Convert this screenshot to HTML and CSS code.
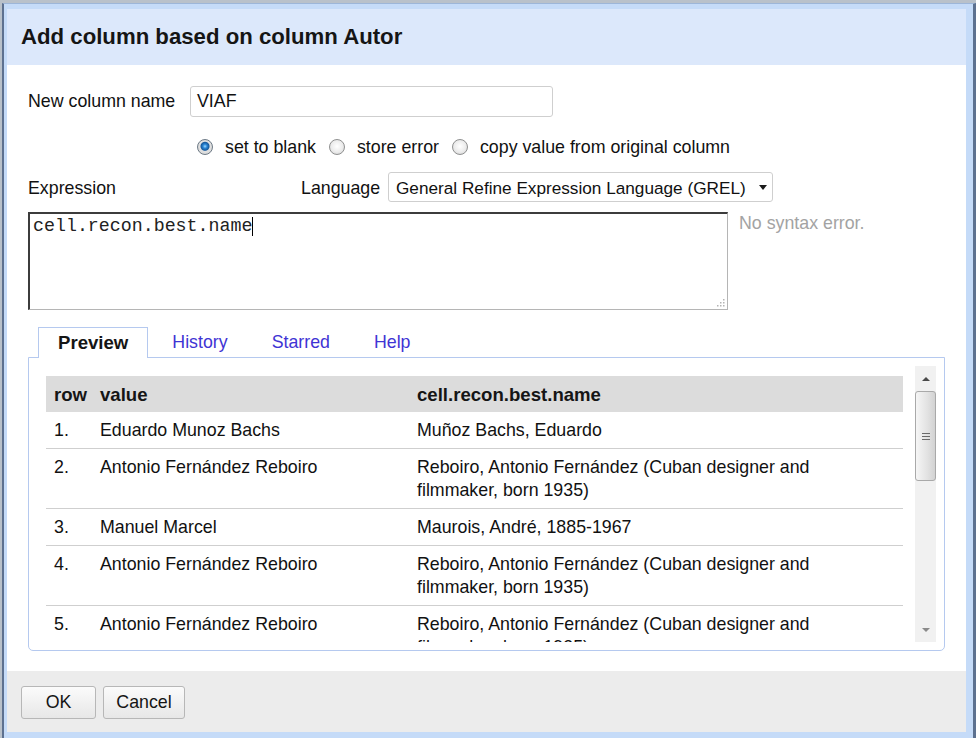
FILE: index.html
```html
<!DOCTYPE html>
<html>
<head>
<meta charset="utf-8">
<title>Add column based on column Autor</title>
<link rel="stylesheet" href="styles.css">
</head>
<body>
<div class="frame">
  <div class="dialog">
    <div class="dlg-header"><h1 class="dlg-title">Add column based on column Autor</h1></div>
    <div class="dlg-body">
      <div class="name-row">
        <span class="field-label">New column name</span>
        <div class="text-input">VIAF</div>
      </div>
      <div class="radio-row">
        <span class="radio checked"></span><span class="radio-label">set to blank</span>
        <span class="radio"></span><span class="radio-label">store error</span>
        <span class="radio"></span><span class="radio-label">copy value from original column</span>
      </div>
      <div class="expr-row">
        <span class="expr-label">Expression</span>
        <span class="lang-label">Language</span>
        <div class="select"><span class="select-text">General Refine Expression Language (GREL)</span><span class="select-arrow"></span></div>
      </div>
      <div class="editor-row">
        <div class="code-area"><span class="code">cell.recon.best.name</span><span class="caret"></span>
          <svg class="grip" width="10" height="10" viewBox="0 0 10 10"><g fill="#b4b4b4"><rect x="8" y="2" width="1.5" height="1.5"/><rect x="5" y="5" width="1.5" height="1.5"/><rect x="8" y="5" width="1.5" height="1.5"/><rect x="2" y="8" width="1.5" height="1.5"/><rect x="5" y="8" width="1.5" height="1.5"/><rect x="8" y="8" width="1.5" height="1.5"/></g></svg>
        </div>
        <div class="status">No syntax error.</div>
      </div>
      <div class="tabs">
        <div class="tab active">Preview</div>
        <div class="tab">History</div>
        <div class="tab">Starred</div>
        <div class="tab">Help</div>
      </div>
      <div class="tab-panel">
        <div class="preview-scroll">
          <div class="table-clip">
            <table class="preview-table">
              <colgroup><col class="c-row"><col class="c-val"><col class="c-res"></colgroup>
              <thead>
                <tr><th>row</th><th>value</th><th>cell.recon.best.name</th></tr>
              </thead>
              <tbody>
                <tr><td>1.</td><td>Eduardo Munoz Bachs</td><td class="res">Muñoz Bachs, Eduardo</td></tr>
                <tr><td>2.</td><td>Antonio Fernández Reboiro</td><td class="res">Reboiro, Antonio Fernández (Cuban designer and filmmaker, born 1935)</td></tr>
                <tr><td>3.</td><td>Manuel Marcel</td><td class="res">Maurois, André, 1885-1967</td></tr>
                <tr><td>4.</td><td>Antonio Fernández Reboiro</td><td class="res">Reboiro, Antonio Fernández (Cuban designer and filmmaker, born 1935)</td></tr>
                <tr><td>5.</td><td>Antonio Fernández Reboiro</td><td class="res">Reboiro, Antonio Fernández (Cuban designer and filmmaker, born 1935)</td></tr>
              </tbody>
            </table>
          </div>
          <div class="scrollbar">
            <div class="sb-btn"><span class="tri-up"></span></div>
            <div class="sb-thumb"><span class="sb-grip"></span></div>
            <div class="sb-track"></div>
            <div class="sb-btn"><span class="tri-down"></span></div>
          </div>
        </div>
      </div>
    </div>
    <div class="dlg-footer">
      <button class="btn btn-ok">OK</button>
      <button class="btn btn-cancel">Cancel</button>
    </div>
  </div>
</div>
</body>
</html>
```
FILE: styles.css
```css
html, body {
  margin: 0;
  padding: 0;
}
body {
  background: #b9c1ca;
  font-family: "Liberation Sans", Arial, sans-serif;
  font-size: 17.8px;
  color: #111;
}
.frame {
  margin: 3px 0 0 2px;
  height: 735px;
  box-sizing: border-box;
  border-left: 2px solid #5d7190;
  border-right: 3px solid #5d7190;
  border-top: 1px solid #9db6d8;
  background: #c5dbf8;
  padding: 5px 7px 6px 3px;
  display: flex;
}
.dialog {
  flex: 1;
  display: flex;
  flex-direction: column;
  background: #fff;
}
.dlg-header {
  height: 56px;
  flex: none;
  background: #dce8fb;
  display: flex;
  align-items: center;
  padding-left: 14px;
}
.dlg-title {
  margin: 0;
  font-size: 22.2px;
  font-weight: bold;
  color: #151515;
}
.dlg-body {
  flex: 1;
  padding: 21px 21px 0 21px;
}
.name-row {
  display: flex;
  align-items: center;
  height: 31px;
}
.field-label {
  width: 162px;
  flex: none;
}
.text-input {
  width: 363px;
  height: 31px;
  box-sizing: border-box;
  border: 1px solid #cfcfcf;
  border-radius: 3px;
  padding-left: 6px;
  display: flex;
  align-items: center;
}
.radio-row {
  margin-top: 18px;
  height: 24px;
  display: flex;
  align-items: center;
  padding-left: 169px;
}
.radio {
  width: 16px;
  height: 16px;
  box-sizing: border-box;
  border-radius: 50%;
  border: 1px solid #8f9090;
  background: radial-gradient(circle at 50% 45%, #ffffff 0%, #ececec 55%, #cdcdcd 100%);
  margin-right: 12px;
  flex: none;
}
.radio.checked {
  border-color: #6d7a86;
  background: radial-gradient(circle at 50% 45%, #9fdcff 0px, #2b86d6 2px, #175a9c 4px, #e2e2e2 5px, #cfcfcf 100%);
}
.radio-label {
  margin-right: 13px;
}
.expr-row {
  margin-top: 13px;
  height: 30px;
  display: flex;
  align-items: center;
}
.expr-label {
  width: 273px;
  flex: none;
  padding-top: 3px;
}
.lang-label {
  width: 87px;
  flex: none;
  padding-top: 3px;
}
.select {
  width: 385px;
  height: 30px;
  box-sizing: border-box;
  border: 1px solid #cfcfcf;
  border-radius: 3px;
  padding-left: 7px;
  display: flex;
  align-items: center;
  background: #fff;
}
.select-text {
  font-size: 17.2px;
  padding-top: 2px;
}
.select-arrow {
  margin-left: auto;
  margin-right: 5px;
  width: 0;
  height: 0;
  border-left: 4.5px solid transparent;
  border-right: 4.5px solid transparent;
  border-top: 5px solid #1a1a1a;
}
.editor-row {
  margin-top: 10px;
  display: flex;
}
.code-area {
  position: relative;
  width: 700px;
  height: 98px;
  box-sizing: border-box;
  border-top: 2px solid #3c3c3c;
  border-left: 2px solid #3c3c3c;
  border-right: 1px solid #b5b5b5;
  border-bottom: 1px solid #b5b5b5;
  padding: 2px 3px;
  font-family: "Liberation Mono", "Courier New", monospace;
  font-size: 18.3px;
  line-height: 20px;
  color: #222;
  display: flex;
  align-items: flex-start;
}
.caret {
  display: inline-block;
  width: 0;
  height: 19px;
  border-left: 1px solid #000;
  margin-top: 1px;
}
.grip {
  position: absolute;
  right: 2px;
  bottom: 2px;
}
.status {
  margin-left: 11px;
  color: #a3a3a3;
  line-height: 20px;
  padding-top: 1px;
}
.tabs {
  margin-top: 17px;
  display: flex;
  padding-left: 10px;
  height: 30px;
}
.tab {
  height: 30px;
  box-sizing: border-box;
  padding: 0 19px;
  display: flex;
  align-items: center;
  margin-right: 4px;
  color: #3f34d4;
  border: 1px solid transparent;
  border-bottom: none;
}
.tab.active {
  position: relative;
  z-index: 1;
  height: 31px;
  margin-bottom: -1px;
  border-color: #b5c9ef;
  background: #fff;
  color: #151515;
  font-weight: bold;
  font-size: 18.6px;
}
.tab-panel {
  border: 1px solid #b5c9ef;
  border-radius: 0 0 5px 5px;
  padding: 8px 8px 8px 17px;
}
.preview-scroll {
  display: flex;
  height: 276px;
}
.table-clip {
  flex: 1;
  overflow: hidden;
  padding-top: 10px;
  margin-right: 12px;
}
.preview-table {
  width: 100%;
  border-collapse: collapse;
  table-layout: fixed;
}
.c-row { width: 46px; }
.c-val { width: 317px; }
.preview-table th {
  background: #dcdcdc;
  text-align: left;
  padding: 7px 8px 6px;
  line-height: 23px;
  font-weight: bold;
  font-size: 18.6px;
  color: #151515;
}
.preview-table td {
  padding: 7px 8px 6px;
  line-height: 23px;
  border-bottom: 1px solid #cfcfcf;
  vertical-align: top;
}
.preview-table td.res {
  padding-right: 30px;
}
.scrollbar {
  width: 21px;
  flex: none;
  background: #f1f1f1;
  display: flex;
  flex-direction: column;
}
.sb-btn {
  height: 25px;
  display: flex;
  align-items: center;
  justify-content: center;
  flex: none;
}
.tri-up {
  width: 0;
  height: 0;
  border-left: 4px solid transparent;
  border-right: 4px solid transparent;
  border-bottom: 4px solid #4a4a4a;
}
.tri-down {
  width: 0;
  height: 0;
  border-left: 4px solid transparent;
  border-right: 4px solid transparent;
  border-top: 4px solid #8a8a8a;
}
.sb-thumb {
  height: 90px;
  box-sizing: border-box;
  border: 1px solid #a9a9a9;
  border-radius: 3px;
  background: linear-gradient(to right, #f6f6f6, #e2e2e2 60%, #d2d2d2);
  display: flex;
  align-items: center;
  justify-content: center;
  flex: none;
}
.sb-grip {
  width: 8px;
  height: 5px;
  border-top: 1px solid #6a6a6a;
  border-bottom: 1px solid #6a6a6a;
  background: linear-gradient(#fff0 2px, #6a6a6a 2px, #6a6a6a 3px, #fff0 3px);
}
.sb-track {
  flex: 1;
}
.dlg-footer {
  height: 61px;
  flex: none;
  box-sizing: border-box;
  background: #ececec;
  display: flex;
  align-items: flex-start;
  padding: 15px 0 0 14px;
  gap: 7px;
}
.btn {
  height: 33px;
  box-sizing: border-box;
  border: 1px solid #b7b7b7;
  border-radius: 3px;
  background: linear-gradient(#fbfbfb, #e7e7e7);
  font-family: "Liberation Sans", Arial, sans-serif;
  font-size: 17.8px;
  color: #151515;
  padding: 0;
}
.btn-ok { width: 75px; }
.btn-cancel { width: 82px; }
```
